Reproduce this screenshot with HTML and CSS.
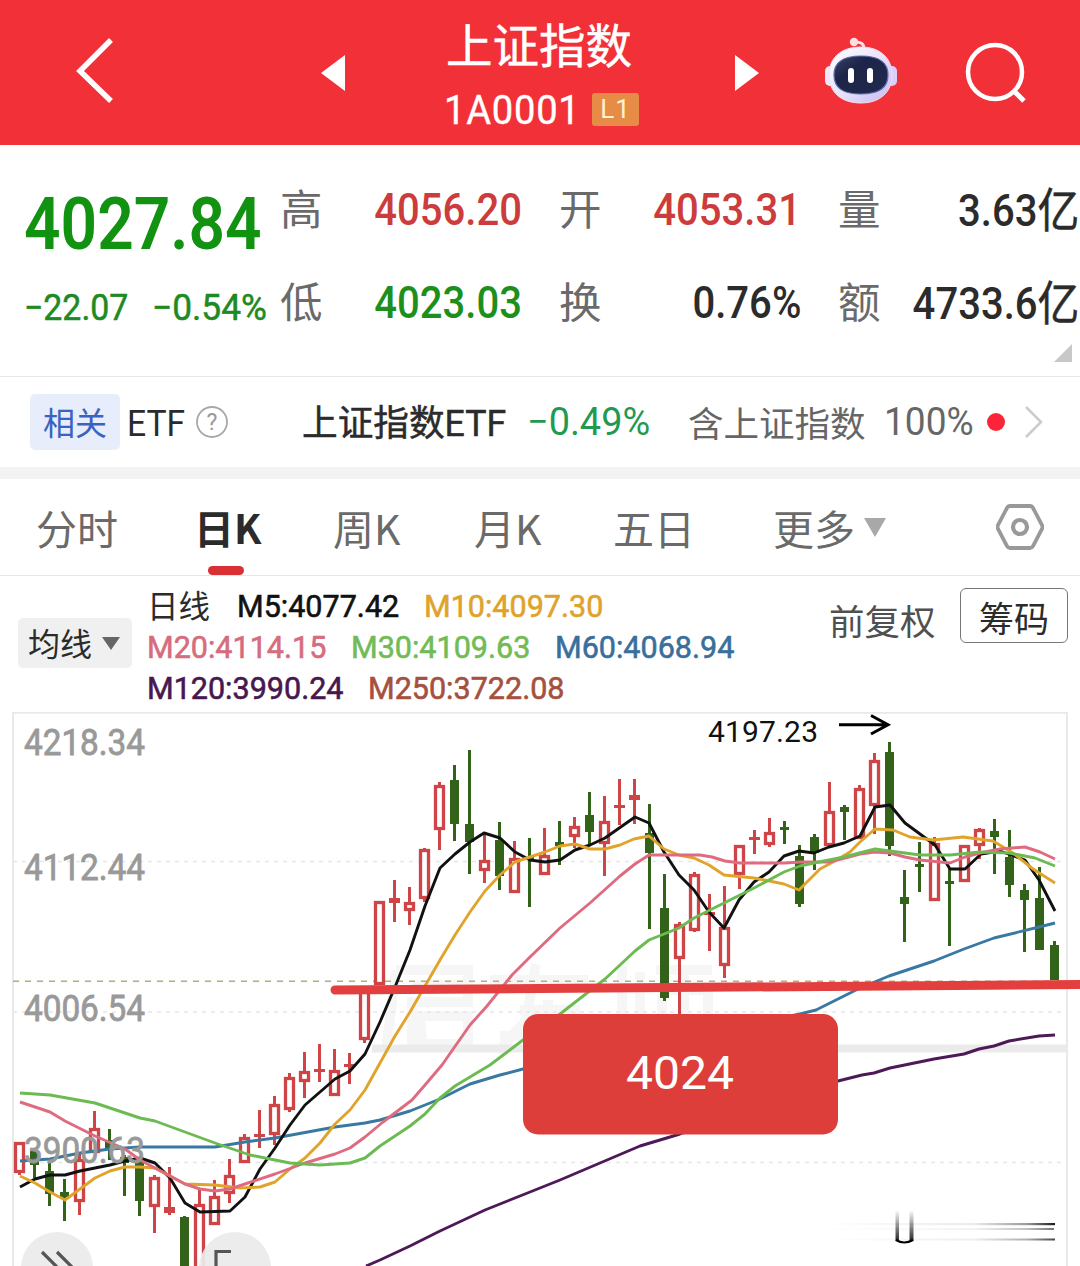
FILE: index.html
```html
<!DOCTYPE html>
<html lang="zh-CN">
<head>
<meta charset="utf-8">
<title>上证指数 1A0001</title>
<link rel="stylesheet" href="styles.css">
</head>
<body>
<header class="topbar">
  <svg class="back" width="40" height="68" viewBox="0 0 40 68"><path d="M37 3 6 34 37 64" fill="none" stroke="#fff" stroke-width="5.5"/></svg>
  <svg class="prev" width="24" height="36" viewBox="0 0 24 36"><path d="M24 0V36L0 18Z" fill="#fff"/></svg>
  <div class="title">
    <h1>上证指数</h1>
    <div class="code"><span class="code-num">1A0001</span><span class="level">L1</span></div>
  </div>
  <svg class="next" width="24" height="36" viewBox="0 0 24 36"><path d="M0 0V36L24 18Z" fill="#fff"/></svg>
  <svg class="robot" width="74" height="68" viewBox="0 0 74 68">
    <defs>
      <linearGradient id="shell" x1="0" y1="0" x2="1" y2="1"><stop offset="0" stop-color="#fff"/><stop offset=".5" stop-color="#e9e4fa"/><stop offset="1" stop-color="#c3b8f4"/></linearGradient>
      <linearGradient id="visor" x1="0" y1="0" x2="1" y2="1"><stop offset="0" stop-color="#3a4168"/><stop offset=".35" stop-color="#1c2547"/><stop offset="1" stop-color="#222b50"/></linearGradient>
    </defs>
    <path d="M30 5Q40 4 40 12" fill="none" stroke="#fbdde2" stroke-width="3"/>
    <circle cx="30" cy="5" r="4.2" fill="#fbdde2"/>
    <rect x="1" y="29" width="10" height="20" rx="5" fill="#eee8fb"/><rect x="63" y="29" width="10" height="20" rx="5" fill="#d9d0fa"/>
    <path d="M37 10C56 10 68 21 68 38S56 66 37 66 5 56 5 38 18 10 37 10Z" fill="url(#shell)" stroke="#f4ddea"/>
    <path d="M37 19C55 19 64 25 64 38S55 57 37 57 10 51 10 38 19 19 37 19Z" fill="url(#visor)" stroke="#626cae" stroke-width="1.2"/>
    <rect x="24" y="31" width="6" height="15" rx="3" fill="#fff"/><rect x="43" y="31" width="6" height="15" rx="3" fill="#fff"/>
  </svg>
  <svg class="search" width="62" height="64" viewBox="0 0 62 64"><circle cx="30" cy="30" r="27" fill="none" stroke="#fff" stroke-width="4.5"/><path d="M48 48 59 59" stroke="#fff" stroke-width="5"/></svg>
</header>

<section class="quote">
  <div class="last">
    <div class="price">4027.84</div>
    <div class="change"><span>−22.07</span><span class="pct">−0.54%</span></div>
  </div>
  <dl class="stats">
    <div><dt>高</dt><dd class="up">4056.20</dd></div>
    <div><dt>开</dt><dd class="up">4053.31</dd></div>
    <div><dt>量</dt><dd>3.63<i>亿</i></dd></div>
    <div><dt>低</dt><dd class="down">4023.03</dd></div>
    <div><dt>换</dt><dd>0.76%</dd></div>
    <div><dt>额</dt><dd>4733.6<i>亿</i></dd></div>
  </dl>
  <svg class="expand" width="18" height="18"><path d="M18 0V18H0Z" fill="#c8c8c8"/></svg>
</section>

<section class="etf">
  <span class="tag">相关</span>
  <span class="etf-label">ETF</span>
  <svg class="help" width="32" height="32" viewBox="0 0 32 32"><circle cx="16" cy="16" r="15" fill="none" stroke="#a8a8a8" stroke-width="1.8"/><text x="16" y="24" text-anchor="middle" class="q">?</text></svg>
  <span class="etf-name">上证指数ETF</span>
  <span class="etf-chg">−0.49%</span>
  <span class="etf-inc">含上证指数</span>
  <span class="etf-pct">100%</span>
  <i class="dot"></i>
  <svg class="go" width="20" height="34" viewBox="0 0 20 34"><path d="M2 2 17 17 2 32" fill="none" stroke="#ccc" stroke-width="2.6"/></svg>
</section>

<nav class="tabs">
  <span class="t1">分时</span>
  <span class="t2 active">日K</span>
  <span class="t3">周K</span>
  <span class="t4">月K</span>
  <span class="t5">五日</span>
  <span class="t6">更多</span>
  <svg class="caret" width="22" height="19"><path d="M0 0H22L11 19Z" fill="#a8a8a8"/></svg>
  <svg class="gear" width="48" height="46" viewBox="0 0 48 46"><path d="M14 2H34Q36 2 37 4L46 21Q47 23 46 25L37 42Q36 44 34 44H14Q12 44 11 42L2 25Q1 23 2 21L11 4Q12 2 14 2Z" fill="none" stroke="#999" stroke-width="3.8"/><circle cx="24" cy="23" r="7" fill="none" stroke="#999" stroke-width="4.2"/></svg>
</nav>

<section class="legend">
  <div class="ma-select"><span>均线</span><svg width="18" height="13"><path d="M0 0H18L9 13Z" fill="#666"/></svg></div>
  <div class="ma">
    <div><b class="cn">日线</b><span class="m5">M5:4077.42</span><span class="m10">M10:4097.30</span></div>
    <div><span class="m20">M20:4114.15</span><span class="m30">M30:4109.63</span><span class="m60">M60:4068.94</span></div>
    <div><span class="m120">M120:3990.24</span><span class="m250">M250:3722.08</span></div>
  </div>
  <span class="adjust">前复权</span>
  <span class="chips">筹码</span>
</section>

<svg class="chart" width="1080" height="554" viewBox="0 712 1080 554">
  <defs>
    <linearGradient id="streak"><stop offset="0" stop-color="#000" stop-opacity="0"/><stop offset=".65" stop-color="#000" stop-opacity=".08"/><stop offset=".88" stop-color="#000" stop-opacity=".4"/><stop offset="1" stop-color="#000" stop-opacity=".9"/></linearGradient>
    <linearGradient id="drop" x1="0" y1="0" x2="0" y2="1"><stop offset="0" stop-color="#000" stop-opacity="0"/><stop offset="1" stop-color="#000" stop-opacity=".85"/></linearGradient>
  </defs>
  <g class="watermark">
    <path d="M396 970H468V1002H412V1050M396 970 386 1050M412 985H466M420 1016H468V1044H422Z"/>
    <path d="M490 980H588M536 964 526 1020 498 1052M520 1010H580M548 1000V1054M500 1036H586"/>
    <path d="M622 966V1050M640 972V1040M656 970H712M684 970V1056M662 990H708V1036M662 990V1036"/>
  </g>
  <path d="M372 1048.5H1067" stroke="#ebebeb" stroke-width="8"/>
  <path class="grid" d="M13 861.5H1067M13 1012H1067M13 1162.5H1067"/>
  <path class="frame" d="M13 1266V712.8H1067V1266"/>
  <path class="lastline" d="M13 981.3H1067"/>
  <g id="candles"></g>
  <g class="lines">
    <path stroke="#3878a2" d="M20 1161 50 1159 80 1153 110 1149 140 1147 170 1147 215 1147 245 1142 275 1138 335 1127 365 1123 380 1120 410 1111 440 1099 470 1084 500 1075 523 1069 800 1014 816 1010 834 1001 860 988 889 976 934 961 964 949 994 938 1039 927 1055 923"/>
    <path stroke="#4d1a57" d="M366 1266 380 1260 395 1253 410 1246 440 1231 485 1210 530 1192 560 1180 600 1163 640 1146 680 1134 838 1081 862 1075 874 1073 890 1068 934 1059 964 1054 979 1049 994 1046 1009 1041 1039 1036 1055 1035"/>
    <path stroke="#111" d="M20 1187 35 1179 50 1175 65 1175 80 1171 110 1165 125 1161 140 1158 155 1163 170 1178 185 1203 200 1212 230 1211 245 1197 260 1169 275 1148 290 1125 305 1105 335 1079 350 1071 365 1054 380 1022 395 987 410 950 425 906 440 868 455 854 470 842 484 833 500 838 515 852 530 860 545 862 560 860 575 850 590 845 605 838 635 817 649 823 664 852 679 875 694 890 709 912 724 928 739 900 754 882 769 872 784 856 799 851 814 853 829 847 844 843 860 836 875 807 890 805 905 823 920 834 935 845 950 869 965 869 981 854 1000 851 1025 860 1039 880 1055 911"/>
    <path stroke="#e0a42c" d="M20 1176 35 1183 50 1192 65 1200 80 1189 95 1178 110 1171 125 1167 140 1167 155 1168 170 1176 185 1184 215 1185 240 1188 260 1187 275 1182 290 1169 305 1158 320 1143 335 1124 350 1110 365 1090 380 1063 395 1036 410 1012 425 986 440 960 455 935 470 912 485 891 500 875 515 862 530 857 545 852 560 846 575 844 590 849 605 849 620 845 634 839 649 836 664 849 679 855 694 858 709 865 724 875 754 878 784 884 799 890 820 869 833 862 850 852 860 842 875 829 893 830 910 837 933 840 963 837 993 841 1013 853 1033 869 1055 883"/>
    <path stroke="#df6b80" d="M20 1102 50 1112 65 1121 95 1136 125 1149 140 1160 155 1168 170 1176 185 1184 200 1189 215 1191 230 1189 245 1184 275 1174 305 1163 335 1154 350 1148 365 1137 383 1122 412 1100 425 1085 442 1065 470 1025 487 1006 512 975 530 957 560 928 590 903 620 876 635 864 649 855 700 855 712 857 725 861 740 863 785 863 800 862 830 862 860 854 875 852 890 853 905 857 920 860 950 863 965 857 980 853 1000 849 1025 847 1040 852 1055 859"/>
    <path stroke="#6cbb52" d="M20 1093 50 1095 95 1103 140 1118 155 1121 185 1132 215 1143 250 1155 275 1160 290 1163 320 1165 350 1163 365 1158 380 1146 410 1126 425 1114 440 1098 455 1086 490 1065 523 1040 560 1014 605 979 635 951 649 940 679 928 694 918 724 903 754 888 784 872 800 866 814 863 844 857 875 849 905 853 920 855 950 855 980 852 1009 853 1035 858 1055 866"/>
  </g>
  <g class="axis">
    <text x="24" y="755" textLength="121" lengthAdjust="spacingAndGlyphs">4218.34</text>
    <text x="24" y="880" textLength="121" lengthAdjust="spacingAndGlyphs">4112.44</text>
    <text x="24" y="1021" textLength="121" lengthAdjust="spacingAndGlyphs">4006.54</text>
    <text x="24" y="1163" textLength="121" lengthAdjust="spacingAndGlyphs">3900.63</text>
  </g>
  <text class="peak" x="708" y="742" textLength="110">4197.23</text>
  <path d="M839 724.7H888M871 715.5 888 724.7 871 734" fill="none" stroke="#000" stroke-width="3"/>
  <g class="fab">
    <circle cx="57" cy="1268" r="36"/><circle cx="235" cy="1268" r="36"/>
    <path d="M42 1252 60 1270M57 1252 75 1270M231 1251.5H216V1268"/>
  </g>
  <path d="M335 990 1088 984.5" stroke="#e23f3e" stroke-width="9" stroke-linecap="round"/>
  <rect x="523" y="1014" width="315" height="120.5" rx="15" fill="#dd3e3a"/>
  <text class="tip" x="626" y="1089" textLength="108" lengthAdjust="spacingAndGlyphs">4024</text>
  <g>
    <rect x="825" y="1223" width="230" height="2.2" fill="url(#streak)"/><rect x="825" y="1228" width="229" height="2" fill="url(#streak)" opacity=".6"/><rect x="825" y="1238.5" width="230" height="2" fill="url(#streak)" opacity=".8"/>
    <rect x="895.5" y="1210" width="3.5" height="31" fill="url(#drop)"/><rect x="909.5" y="1210" width="4" height="31" fill="url(#drop)"/>
    <path d="M896 1240Q904 1245 913 1240" fill="none" stroke="#000" stroke-width="2.2"/>
  </g>
</svg>
<script src="chart.js"></script>
</body>
</html>
```
FILE: styles.css
```css
* { box-sizing: border-box; margin: 0; padding: 0; }
body { width: 1080px; height: 1266px; overflow: hidden; background: #fff; color: #2b2b2b; font-family: Roboto, "Noto Sans CJK SC", sans-serif; }
svg { display: block; flex: none; }
i { font-style: normal; }
span, dt, dd { white-space: nowrap; }

.topbar { height: 145px; background: #f23037; display: flex; color: #fff; }
.back { margin: 37px 0 0 74px; }
.prev { margin: 55px 0 0 207px; }
.title { width: 200px; margin-left: 95px; padding-top: 15px; }
h1 { font: 400 46.5px/56px "Noto Sans CJK SC", sans-serif; padding-left: 6px; -webkit-text-stroke: .5px #fff; }
.code { display: flex; padding: 14px 0 0 4px; }
.code-num { width: 148px; font-size: 41px; line-height: 50px; letter-spacing: .8px; transform: scaleX(.93); transform-origin: left; -webkit-text-stroke: .4px #fff; }
.level { width: 47px; height: 33px; margin-top: 8px; border-radius: 3px; background: #e68c47; color: #fff3cf; font-size: 26px; line-height: 33px; text-align: center; letter-spacing: 1px; }
.next { margin: 55px 0 0 95px; }
.robot { margin: 37px 0 0 65px; }
.search { margin: 42px 0 0 67px; }

.quote { height: 232px; border-bottom: 1px solid #e8e8e8; display: flex; position: relative; }
.last { width: 280px; padding: 39px 0 0 24px; color: #119211; }
.price { font-size: 73px; font-weight: 600; line-height: 80px; transform: scaleX(.877); transform-origin: left; }
.change { display: flex; margin-top: 23px; font-size: 36px; font-weight: 400; line-height: 42px; color: #1d8a22; -webkit-text-stroke: .5px #1d8a22; }
.change span { width: 130px; transform: scaleX(.94); transform-origin: left; }
.change .pct { transform: scaleX(.98); }
.stats { display: grid; grid-template-columns: 242px 279px 278px; grid-template-rows: 93px 93px; margin-top: 20px; }
.stats div { display: flex; justify-content: space-between; align-items: center; height: 90px; }
.stats div:nth-child(3n+2), .stats div:nth-child(3n) { padding-left: 37px; }
dt { margin-top: -6px; font: 400 42.5px/60px "Noto Sans CJK SC", sans-serif; color: #6a6a6a; }
dd { font-size: 45px; font-weight: 500; line-height: 60px; transform: scaleX(.89); transform-origin: right; }
dd i { font-size: 47px; font-weight: 400; -webkit-text-stroke: .5px #2b2b2b; position: relative; top: 1px; }
.up { color: #cc3c3c; }
.down { color: #1d8f1d; }
.expand { position: absolute; right: 8px; bottom: 14px; }

.etf { height: 102px; border-bottom: 12px solid #f3f3f3; display: flex; align-items: center; font-size: 37px; line-height: 56px; }
.tag { width: 90px; height: 56px; margin-left: 30px; border-radius: 5px; background: #e7edfb; color: #3a62c0; font: 400 32px/55px "Noto Sans CJK SC", sans-serif; text-align: center; }
.etf-label { width: 62px; margin: 4px 0 0 7px; transform: scaleX(.91); transform-origin: left; }
.help { margin-left: 7px; }
.q { font: 23px Roboto, sans-serif; fill: #999; }
.etf-name { width: 212px; margin: 4px 0 0 74px; font: 400 36px/56px Roboto, "Noto Sans CJK SC", sans-serif; -webkit-text-stroke: .5px #2b2b2b; transform: scaleX(.99); transform-origin: left; }
.etf-chg { width: 124px; margin: -1px 0 0 13px; font-size: 39px; color: #1f9a52; transform: scaleX(.97); transform-origin: left; }
.etf-inc { width: 180px; margin: -1px 0 0 37px; font: 400 35.5px/56px "Noto Sans CJK SC", sans-serif; color: #666; }
.etf-pct { width: 90px; margin: -1px 0 0 16px; font-size: 39px; color: #666; transform: scaleX(.95); transform-origin: left; }
.dot { width: 18px; height: 18px; margin-left: 13px; border-radius: 9px; background: #fb2438; }
.go { margin-left: 19px; }

.tabs { height: 97px; border-bottom: 1px solid #e6e6e6; display: flex; align-items: center; font: 400 41px/60px "Noto Sans CJK SC", sans-serif; color: #6a6a6a; }
.tabs span { margin-top: -1px; }
.tabs .t1 { width: 82px; margin-left: 36px; }
.tabs .t2 { width: 68px; margin-left: 76px; }
.tabs .t3 { width: 70px; margin-left: 71px; }
.tabs .t4 { width: 70px; margin-left: 71px; }
.tabs .t5 { width: 82px; margin-left: 69px; }
.tabs .t6 { width: 82px; margin-left: 78px; }
.tabs .active { font-weight: 700; font-size: 40px; color: #2b2b2b; position: relative; }
.active::after { content: ""; position: absolute; left: 14px; bottom: -18px; width: 36px; height: 9px; border-radius: 5px; background: #d83033; }
.caret { margin-left: 9px; }
.gear { margin-left: 110px; }

.legend { height: 135px; display: flex; align-items: flex-start; }
.ma-select { width: 114px; height: 50px; margin: 42px 0 0 18px; padding-left: 10px; border-radius: 5px; background: #f0f0f0; display: flex; align-items: center; gap: 10px; font: 400 32px/50px "Noto Sans CJK SC", sans-serif; }
.ma-select span { margin-top: -2px; }
.ma { width: 680px; margin: 10px 0 0 15px; font-size: 32px; line-height: 41px; }
.ma div { display: flex; height: 41px; }
.ma span { transform: scaleX(.954); transform-origin: left; -webkit-text-stroke: .6px currentColor; }
.cn { width: 90px; margin-top: -2px; font: 400 31.5px/40px "Noto Sans CJK SC", sans-serif; }
.m5 { width: 187px; color: #111; }
.m10 { color: #dfa32c; }
.m20, .m30 { width: 204px; }
.m20 { color: #d66c7e; }
.m30 { color: #72bb55; }
.m60 { color: #386f9b; }
.m120 { width: 221px; color: #47184f; }
.m250 { color: #a6503f; }
.adjust { width: 106px; margin: 18px 0 0 2px; font: 400 35.5px/52px "Noto Sans CJK SC", sans-serif; color: #505050; }
.chips { width: 108px; height: 55px; margin: 12px 0 0 25px; border: 1.5px solid #777; border-radius: 6px; font: 400 35px/55px "Noto Sans CJK SC", sans-serif; text-align: center; }

.chart { margin-top: 1px; }
.watermark path { fill: none; stroke: #f6f6f6; stroke-width: 10; }
.grid { stroke: #e6e6e6; stroke-width: 1.5; stroke-dasharray: 4 5; }
.frame { fill: none; stroke: #e9e9e9; stroke-width: 2; }
.lastline { stroke: #b5ac7c; stroke-width: 1.6; stroke-dasharray: 6 6; }
.lines path { fill: none; stroke-width: 2.9; stroke-linejoin: round; }
.wick { stroke-width: 3; }
.rise { stroke: #cf4547; fill: #fff; stroke-width: 3.3; }
.fall { stroke: #326318; fill: #326318; stroke-width: 3; }
.axis text { font: 400 36px Roboto, sans-serif; fill: #999; stroke: #999; stroke-width: .8px; }
.peak { font: 400 30px Roboto, sans-serif; fill: #111; }
.fab circle { fill: #ebebeb; fill-opacity: .93; }
.fab path { fill: none; stroke: #555; stroke-width: 3.2; }
.tip { font: 400 46px Roboto, sans-serif; fill: #fff; }
```
FILE: chart.js
```js
// Each candle: direction, high, body top, body bottom, low.
const candles = `r 1142 1142 1173 1175|g 1149 1151 1165 1178|g 1160 1171 1194 1206|g 1179 1192 1197 1221|r 1152 1159 1202 1215
r 1111 1128 1153 1153|g 1129 1140 1150 1160|g 1155 1157 1163 1196|g 1159 1160 1201 1216|r 1175 1177 1207 1233
r 1167 1207 1213 1215|g 1216 1217 1290 1290|r 1190 1204 1290 1290|r 1180 1196 1225 1225|r 1159 1175 1194 1203
r 1134 1137 1163 1163|r 1110 1134 1137 1148|r 1096 1104 1135 1145|r 1073 1077 1110 1112|r 1052 1071 1082 1098
r 1044 1069 1072 1082|r 1049 1070 1096 1096|r 1053 1064 1067 1084|r 990 990 1040 1043|r 901 901 985 985
r 880 898 903 922|r 887 902 911 925|r 848 849 899 902|r 782 785 830 850|g 765 780 824 841
g 750 824 842 874|r 834 860 871 883|g 822 840 876 890|r 841 858 893 893|g 838 857 860 907
r 828 855 875 875|g 821 842 846 865|r 817 826 837 848|g 792 815 832 845|r 796 821 844 876
r 779 805 808 825|r 779 795 800 824|g 804 833 853 929|g 874 908 998 1001|r 922 924 959 1016
r 872 874 931 932|r 894 912 915 951|r 886 927 966 978|r 845 845 875 889|r 830 837 840 854
r 818 832 845 847|g 821 827 830 844|g 845 856 904 907|g 834 837 853 870|r 782 811 846 846
g 805 807 812 840|r 785 788 839 839|r 753 760 806 834|g 742 752 846 856|g 870 897 904 942
g 842 864 867 892|r 837 843 901 901|g 868 881 884 946|r 845 845 882 882|r 828 829 846 859
g 819 831 837 874|g 830 857 885 897|g 884 890 900 952|g 867 898 950 950|g 941 945 980 980`.split(/[|\n]/);

document.getElementById("candles").innerHTML = candles.map((row, i) => {
  const [dir, ...v] = row.split(" ");
  const [high, top, bottom, low] = v.map(Number);
  const x = 19.5 + 15 * i;
  const cls = dir === "r" ? "rise" : "fall";
  const half = dir === "r" ? 4 : 3;
  const h = bottom - top;
  const wick = `<path class="wick" d="M${x} ${high}V${low}"/>`;
  const body = h <= 6
    ? `<path d="M${x - half - 1.5} ${(top + bottom) / 2}H${x + half + 1.5}" stroke-width="${h}" style="stroke-width:${h}"/>`
    : `<rect x="${x - half}" y="${top + 1.5}" width="${half * 2}" height="${h - 3}"/>`;
  return `<g class="${cls}">${wick}${body}</g>`;
}).join("");
```
